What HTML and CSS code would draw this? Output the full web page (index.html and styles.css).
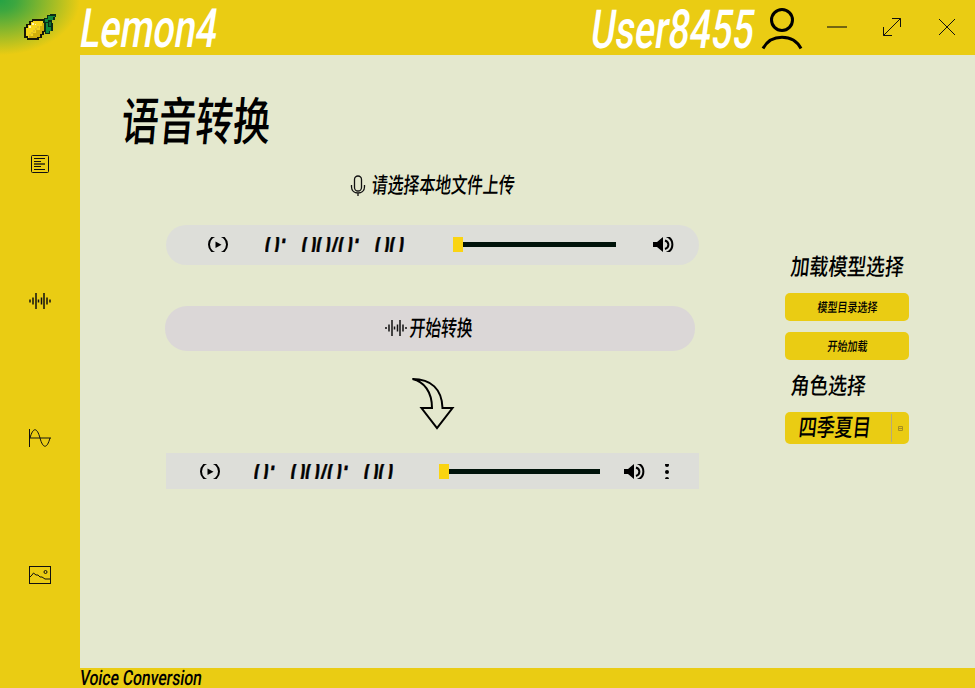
FILE: index.html
```html
<!DOCTYPE html>
<html lang="zh-CN">
<head>
<meta charset="utf-8">
<title>Lemon4</title>
<link rel="stylesheet" href="styles.css">
</head>
<body>
<div class="app">
  <header class="titlebar">
    <div class="logo">
      <svg width="32" height="28" viewBox="0 0 32 28">
        <path d="M8 5h12v3h2v10h-2v3h-2v3h-3v2H3v-2H0V13h2v-3h3V7h3z" fill="#171707"/>
        <path d="M9 7h10v3h1v7h-2v3h-2v3h-3v1H4v-2H2v-8h2v-3h3V8h2z" fill="#f5d51b"/>
        <path d="M18 9h2v8h-2v3h-2v3h-3v1H5v-2h4v-3h3v-3h4v-4h2z" fill="#cfae0c"/>
        <path d="M5 20h2v-2h2v-2h2v-2h2v-2h2v2h-2v2h-2v2H9v2H7v2H5z" fill="#dfc02a"/>
        <path d="M8 9h2v2H8zM5 12h2v2H5zM11 10h1v1h-1z" fill="#fff7b0"/>
        <path d="M20 4h3V1h3V0h6v3h-1v3h-3v3h1v8h-3v3h-5v-4h-1V9h-1z" fill="#0b2c17"/>
        <path d="M21 5h3V2h7v1h-2v3h-5v2h-3zM22 9h2v4h3v4h-2v2h-3z" fill="#128a3c"/>
        <path d="M25 8h2v4h-2z" fill="#0e6e31"/>
      </svg>
    </div>
    <svg class="brand" width="150" height="55"><text class="latin head" transform="translate(0 47) skewX(-9)" x="-2" textLength="137" lengthAdjust="spacingAndGlyphs">Lemon4</text></svg>
    <svg class="user" width="170" height="55"><text class="latin head" transform="translate(0 48) skewX(-8)" x="-2" textLength="163" lengthAdjust="spacingAndGlyphs">User8455</text></svg>
    <svg class="avatar" width="44" height="55" viewBox="0 0 44 55"><circle cx="22" cy="20" r="10.5"/><path d="M3 48.5C11 33.5 33 33.5 41 48.5"/></svg>
    <div class="controls">
      <svg width="22" height="22"><path d="M1 11h20" stroke-opacity=".55" stroke-width="2"/></svg>
      <svg width="22" height="22"><path d="M2.5 19.500L19.500 2.500M11 2.500h8.500V11M2.500 11v8.500H11"/></svg>
      <svg width="22" height="22"><path d="M3 3l16 16M19 3L3 19"/></svg>
    </div>
  </header>

  <nav class="sidebar">
    <svg width="22" height="22"><rect x="2.500" y="2.500" width="17" height="17" rx="1"/><path d="M5 5.500h11M5 8.500h7M5 13.500h7M5 16.500h11"/><path d="M5 11h11" stroke-width="2" stroke-opacity=".65"/></svg>
    <svg width="22" height="22" viewBox="0 0 22 22"><path class="wave" d="M1 9.500v3M4 7.500v7M7 3v16M9.500 9.500v3M12.500 7.500v7M15 3v16M18 7.500v7M21 9.500v3"/></svg>
    <svg width="22" height="22"><path d="M.5 2v18"/><path d="M1 11h21" stroke-width="1.500" stroke-opacity=".65"/><path d="M1 11C4 0 8 0 11 11S18 22 21 11"/></svg>
    <svg width="22" height="22"><rect x=".5" y="2.500" width="21" height="17"/><path d="M1 13l2-2 1.500-2L7 11h2l2 2h2l3 2h5"/><circle cx="16.500" cy="8" r="1.500"/></svg>
  </nav>

  <main class="content">
    <section class="converter">
      <svg class="page-title" width="170" height="60"><text class="cjk" transform="translate(0 48) skewX(-5)" x="-2" textLength="149" lengthAdjust="spacingAndGlyphs" font-size="51">语音转换</text></svg>
      <div class="upload">
        <svg class="icon" width="16" height="22"><rect x="4.500" y="1" width="7" height="15" rx="3.500"/><path d="M1.500 10v2c0 8 13 8 13 0v-2M8 18v3"/></svg>
        <svg width="150" height="28"><text class="cjk" transform="translate(0 22) skewX(-6)" x="-2" textLength="143" lengthAdjust="spacingAndGlyphs" font-size="22">请选择本地文件上传</text></svg>
      </div>

      <div class="player source">
        <svg class="play" width="22" height="15" viewBox="0 0 22 15"><circle cx="11" cy="7.500" r="9"/><path d="M8.500 4.500v6.500l6-3.250z"/></svg>
        <svg class="time" width="142" height="15"><text transform="translate(0 23) skewX(-8)" x="-2" textLength="139" lengthAdjust="spacingAndGlyphs">0: 00/0: 00</text></svg>
        <div class="track"><i class="thumb"></i><i class="line"></i></div>
        <svg class="volume" width="21" height="15" viewBox="0 0 21 15"><path class="horn" d="M0 5h4l6-5v15l-6-5H0z"/><path d="M12 3.500c4.500 1.500 4.500 7 0 8.500M13-1c8.500 3 8.500 14 0 17"/></svg>
      </div>

      <button class="convert">
        <svg width="22" height="22" viewBox="0 0 22 22"><path class="wave" d="M1 10v2M4 7.500v7M7 3v16M9.500 9.500v3M12.500 7.500v7M15 3v16M18 7.500v7M21 10v2"/></svg>
        <svg width="68" height="28"><text class="cjk" transform="translate(2 21.500) skewX(-5)" textLength="63" lengthAdjust="spacingAndGlyphs" font-size="22">开始转换</text></svg>
      </button>

      <svg class="arrow" width="44" height="54" viewBox="0 0 44 54"><path d="M1.500 2C20 2 31 12 31.500 31h10L26 51 10.500 31H21C21 15 13 4.500 1.500 2z"/></svg>

      <div class="player result">
        <svg class="play" width="22" height="15" viewBox="0 0 22 15"><circle cx="11" cy="7.500" r="9"/><path d="M8.500 4.500v6.500l6-3.250z"/></svg>
        <svg class="time" width="142" height="15"><text transform="translate(0 23) skewX(-8)" x="-2" textLength="139" lengthAdjust="spacingAndGlyphs">0: 00/0: 00</text></svg>
        <div class="track"><i class="thumb"></i><i class="line"></i></div>
        <svg class="volume" width="21" height="15" viewBox="0 0 21 15"><path class="horn" d="M0 5h4l6-5v15l-6-5H0z"/><path d="M12 3.500c4.500 1.500 4.500 7 0 8.500M13-1c8.500 3 8.500 14 0 17"/></svg>
        <svg class="more" width="4" height="15"><circle cx="2" cy="1" r="2"/><circle cx="2" cy="8" r="2"/><circle cx="2" cy="15" r="2"/></svg>
      </div>
    </section>

    <aside class="models">
      <svg class="label" width="124" height="27"><text class="cjk" transform="translate(5 20) skewX(-6)" textLength="113" lengthAdjust="spacingAndGlyphs" font-size="23">加载模型选择</text></svg>
      <button class="action"><svg width="66" height="20"><text class="cjk" transform="translate(3 15) skewX(-6)" textLength="60" lengthAdjust="spacingAndGlyphs" font-size="13">模型目录选择</text></svg></button>
      <button class="action"><svg width="66" height="20"><text class="cjk" transform="translate(13 15) skewX(-6)" textLength="40" lengthAdjust="spacingAndGlyphs" font-size="13">开始加载</text></svg></button>
      <svg class="label role" width="124" height="27"><text class="cjk" transform="translate(5 21) skewX(-6)" textLength="75" lengthAdjust="spacingAndGlyphs" font-size="23">角色选择</text></svg>
      <div class="select">
        <svg width="106" height="32"><text class="cjk" transform="translate(13 24) skewX(-6)" textLength="72" lengthAdjust="spacingAndGlyphs" font-size="24">四季夏目</text></svg>
        <span class="drop"><svg width="5" height="5"><path d="M.5.5h4v4h-4zM.5 2.500h4"/></svg></span>
      </div>
    </aside>
  </main>

  <footer class="status">
    <svg width="130" height="20"><text class="latin" transform="translate(0 17) skewX(-8)" x="-1" textLength="122" lengthAdjust="spacingAndGlyphs" font-size="21">Voice Conversion</text></svg>
  </footer>
</div>
</body>
</html>
```
FILE: styles.css
```css
* { box-sizing: border-box; }
body { margin: 0; }
svg { display: block; flex: none; overflow: visible; fill: none; stroke: #111; stroke-width: 1; }
text { stroke: none; fill: #000; white-space: pre; }
.cjk { font-family: "Noto Sans CJK SC", sans-serif; font-weight: 500; }
.latin { font-family: Roboto, sans-serif; font-weight: 500; }
.head { fill: #fff; font-size: 54px; }
button { border: 0; padding: 0; }

.app {
  width: 975px;
  height: 688px;
  display: grid;
  grid-template: 55px 613px 20px / 80px 895px;
  background: #eacc13;
  overflow: hidden;
}
.titlebar {
  grid-column: 1 / 3;
  display: flex;
}
.logo {
  width: 80px;
  padding: 14px 0 0 24px;
  background: radial-gradient(ellipse 80px 55px at 0 0, #25a244 0%, #3da73f 20%, #eacc13 100%);
}
.logo svg { stroke: none; shape-rendering: crispEdges; }
.user { margin-left: 361px; }
.avatar { margin-left: -1px; stroke: #000; stroke-width: 3; }
.controls { margin: 16px 0 0 22px; display: flex; gap: 33px; }

.sidebar {
  padding-top: 40px;
  display: grid;
  grid-template-rows: repeat(4, 137px);
  place-items: center;
}
.wave { stroke-width: 1.5; }

.content { background: #e4e8ce; display: flex; }
.converter { width: 705px; padding: 37px 0 0 85px; }
.page-title { margin-left: -43px; }
.upload { display: flex; margin: 19px 0 0 185px; gap: 7px; height: 33px; }
.upload .icon { margin-top: 4px; stroke-width: 1.3; }

.player { display: flex; align-items: center; background: #ddded9; }
.source { width: 533px; height: 40px; margin: 21px 0 0 1px; border-radius: 20px; padding: 0 0 1px 41px; }
.result { width: 533px; height: 36px; margin: 22px 0 0 1px; padding-left: 33px; }
.player svg { overflow: hidden; }
.play { stroke: #000; stroke-width: 2; }
.play path { fill: #000; stroke: none; }
.time { margin-left: 36px; }
.result .time { margin-left: 33px; }
.time text { font: 400 40px "Liberation Sans", sans-serif; word-spacing: 12px; stroke: #000; stroke-width: .8; }
.track { display: flex; align-items: center; width: 163px; margin-left: 46px; }
.result .track { width: 161px; margin-left: 43px; }
.thumb { width: 10px; height: 15px; background: #fad412; }
.line { flex: 1; height: 5px; background: #00130a; }
.volume { margin-left: 37px; stroke: #000; stroke-width: 2; }
.result .volume { margin-left: 24px; }
.volume .horn, .more { fill: #000; stroke: none; }
.more { margin-left: 20px; }

.convert {
  display: flex;
  align-items: center;
  justify-content: center;
  width: 530px;
  height: 45px;
  margin-top: 41px;
  padding-bottom: 1px;
  border-radius: 22px;
  background: #dbd7d7;
}
.arrow { margin: 26px 0 0 246px; stroke: #000; stroke-width: 2; }

.models { width: 124px; padding-top: 200px; }
.action {
  display: flex;
  align-items: center;
  justify-content: center;
  width: 124px;
  height: 28px;
  margin-top: 11px;
  border-radius: 5px;
  background: #eacc13;
}
.role { margin-top: 13px; }
.select {
  display: flex;
  height: 32px;
  margin-top: 12px;
  border-radius: 5px;
  background: #eacc13;
}
.drop { width: 18px; margin: 2px 0; display: grid; place-items: center; border-left: 1px solid #b6aa78; }
.drop svg { stroke: #a78f22; }
.status { grid-column: 2; }
```
